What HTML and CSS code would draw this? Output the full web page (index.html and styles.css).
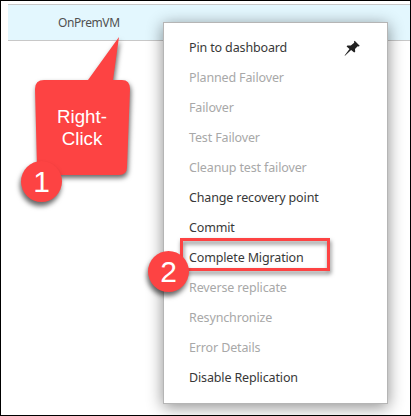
FILE: index.html
```
<!DOCTYPE html>
<html lang="en">
<head>
<meta charset="utf-8">
<title>OnPremVM</title>
<link rel="stylesheet" href="styles.css">
</head>
<body>
<main class="frame">
  <div class="row">OnPremVM</div>
  <ul class="menu">
    <li class="item"><span>Pin to dashboard</span>
      <svg class="pin" width="17" height="17" viewBox="0 0 17 17"><path d="M10.7.8 15.7 5.8 14.8 6.5 13.7 6.2 11 9 11.2 11.8 10.2 12.6 7.1 10 1 15.7.6 15.4 5.5 9 2.6 6.5 3.4 5.4 6.8 5.6 10.2 2.8 10 1.5Z"/></svg>
    </li>
    <li class="item off"><span>Planned Failover</span></li>
    <li class="item off"><span>Failover</span></li>
    <li class="item off"><span>Test Failover</span></li>
    <li class="item off"><span>Cleanup test failover</span></li>
    <li class="item"><span>Change recovery point</span></li>
    <li class="item"><span>Commit</span></li>
    <li class="item"><span>Complete Migration</span></li>
    <li class="item off"><span>Reverse replicate</span></li>
    <li class="item off"><span>Resynchronize</span></li>
    <li class="item off"><span>Error Details</span></li>
    <li class="item"><span>Disable Replication</span></li>
  </ul>
  <div class="highlight"></div>
  <div class="callout">
    <svg class="bubble" width="96" height="140" viewBox="0 0 96 140"><path d="M9 43H53L84 0 78 43H87Q95 43 95 52L92 130Q92 138 84 138H10Q3 138 2 130L0 52Q0 43 9 43Z"/></svg>
    <div class="label">Right-<br>Click</div>
  </div>
  <div class="badge one">1</div>
  <div class="badge two">2</div>
</main>
</body>
</html>
```
FILE: styles.css
```
* { box-sizing: border-box; }
body { margin: 0; background: #fff; font-family: "Noto Sans", sans-serif; }
.frame {
  position: relative;
  width: 411px;
  height: 416px;
  padding-top: 3px;
  border: 1px solid #000;
  overflow: hidden;
}
.row {
  height: 37px;
  margin-left: 7px;
  padding-left: 50px;
  border-top: 1px solid #c8c8c8;
  border-bottom: 1px solid #c8c8c8;
  background: #e3f7fe;
  color: #505050;
  font-size: 12px;
  line-height: 36px;
  letter-spacing: -0.4px;
}
.menu {
  position: absolute;
  left: 162px;
  top: 21px;
  width: 225px;
  height: 382px;
  margin: 0;
  padding: 10px 25px 8px;
  list-style: none;
  background: #fff;
  border: 1px solid #b5b5b5;
  box-shadow: 0 3px 15px rgba(0, 0, 0, .45);
}
.item {
  display: flex;
  align-items: center;
  justify-content: space-between;
  height: 30px;
  color: #383838;
  font-size: 12.5px;
  line-height: 30px;
  letter-spacing: -0.14px;
  white-space: nowrap;
}
.off { color: #a8a8a8; }
.pin { margin-right: 1px; fill: #222; }
.highlight {
  position: absolute;
  left: 179px;
  top: 237px;
  width: 150px;
  height: 33px;
  border: 3px solid #fd4343;
  filter: drop-shadow(1px 3px 2px rgba(0, 0, 0, .5));
}
.callout { position: absolute; left: 34px; top: 36px; width: 96px; height: 140px; }
.bubble {
  display: block;
  overflow: visible;
  fill: #fd4343;
  filter: drop-shadow(1px 3px 2.5px rgba(0, 0, 0, .6));
}
.label {
  position: absolute;
  inset: 69px 2px auto 0;
  color: #fff;
  font: 18.7px/22px "Liberation Sans", sans-serif;
  text-align: center;
}
.badge {
  position: absolute;
  width: 41px;
  height: 41px;
  border-radius: 50%;
  background: #fd4343;
  color: #fff;
  font: 30px/41px "Liberation Sans", sans-serif;
  text-align: center;
  box-shadow: -1px 4px 5px rgba(0, 0, 0, .6);
}
.one { left: 20px; top: 160px; }
.two { left: 147px; top: 250px; }
```
